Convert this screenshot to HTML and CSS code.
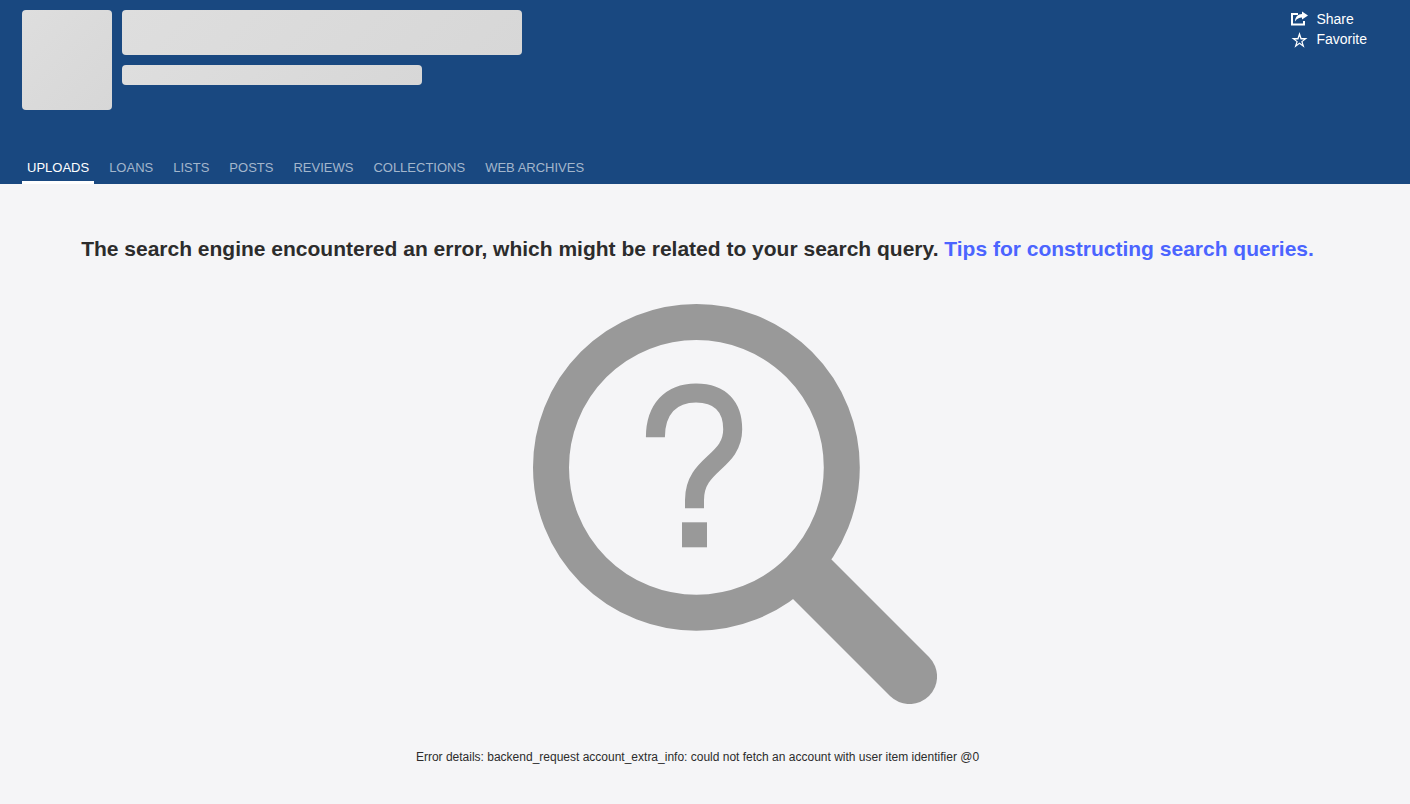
FILE: index.html
```
<!DOCTYPE html>
<html lang="en">
<head>
    <meta charset="UTF-8">
    <meta name="viewport" content="width=device-width, initial-scale=1.0">
    <title>Uploads</title>
    <link rel="stylesheet" href="styles.css">
</head>
<body>
    <header class="profile-header">
        <div class="profile-top">
            <div class="placeholder avatar"></div>
            <div class="profile-info">
                <div class="placeholder name"></div>
                <div class="placeholder subtitle"></div>
            </div>
            <div class="actions">
                <button type="button" class="action-btn">
                    <svg width="18" height="18" viewBox="0 0 18 18" aria-hidden="true">
                        <path d="M8 4H2v10.500h12v-3.500" fill="none" stroke="#fff" stroke-width="2"/>
                        <path d="M12 1.500l6 4-6 4V7.500C9 7.500 7 8.500 5 11.500 5 7 8 4 12 4z" fill="#fff"/>
                    </svg>
                    Share
                </button>
                <button type="button" class="action-btn">
                    <svg width="18" height="18" viewBox="0 0 18 18" aria-hidden="true">
                        <path d="M9.500 2l2 6h6l-4.900 3.700 1.900 6-5-3.700-5 3.700 1.900-6L1.500 8h6zM9.500 6.200L8.400 9.400H5.200l2.600 2-1 3.100 2.700-2 2.700 2-1-3.100 2.600-2h-3.200z" fill="#fff" fill-rule="evenodd"/>
                    </svg>
                    Favorite
                </button>
            </div>
        </div>
        <nav class="tabs">
            <a href="#uploads" class="tab active">UPLOADS</a>
            <a href="#loans" class="tab">LOANS</a>
            <a href="#lists" class="tab">LISTS</a>
            <a href="#posts" class="tab">POSTS</a>
            <a href="#reviews" class="tab">REVIEWS</a>
            <a href="#collections" class="tab">COLLECTIONS</a>
            <a href="#web-archives" class="tab">WEB ARCHIVES</a>
        </nav>
    </header>

    <main class="error-page">
        <h2 class="error-title">The search engine encountered an error, which might be related to your search query. <a href="#tips">Tips for constructing search queries.</a></h2>
        <svg class="error-image" viewBox="-74 0 478 400" aria-hidden="true">
            <circle cx="163.400" cy="163.400" r="145.400" fill="none" stroke="#999" stroke-width="36"/>
            <path d="M289 246L396 353A27.500 27.500 0 0 1 357 392L250 285z" fill="#999"/>
            <path d="M122.400 133.300C122.400 105 138 88.900 163 88.900S199.700 103 199.700 125.300C199.700 159 161.500 159 161.500 196V204.300" fill="none" stroke="#999" stroke-width="19"/>
            <rect x="149" y="218.300" width="25" height="25" fill="#999"/>
        </svg>
        <p class="error-details">Error details: backend_request account_extra_info: could not fetch an account with user item identifier @0</p>
    </main>
</body>
</html>
```

FILE: styles.css
```
html {
    background-color: #f5f5f7;
}

body {
    margin: 0;
    font-family: "Liberation Sans", Arial, sans-serif;
    font-size: 14px;
    line-height: 20px;
    color: #2c2c2c;
}

/* Header */
.profile-header {
    display: flex;
    flex-direction: column;
    gap: 44px;
    padding: 10px 43px 0 22px;
    background-color: #194880;
}

.profile-top {
    display: flex;
    gap: 10px;
}

.profile-info {
    display: flex;
    flex-direction: column;
    gap: 10px;
    flex: 1;
}

.placeholder {
    border-radius: 4px;
    background: linear-gradient(135deg, #dedede, #d7d7d7);
}

.avatar {
    width: 90px;
    height: 100px;
}

.name {
    max-width: 400px;
    height: 45px;
}

.subtitle {
    max-width: 300px;
    height: 20px;
}

.actions {
    display: flex;
    flex-direction: column;
    align-items: flex-start;
    gap: 2px;
}

.action-btn {
    display: flex;
    align-items: center;
    gap: 8px;
    padding: 0;
    border: none;
    background: none;
    color: #fff;
    font: inherit;
    line-height: 18px;
    cursor: pointer;
}

/* Tabs */
.tabs {
    display: flex;
    gap: 10px;
    font-size: 13px;
}

.tab {
    padding: 4px 5px 3px;
    border-bottom: 3px solid transparent;
    color: #a3b6cc;
    text-decoration: none;
}

.tab.active {
    border-bottom-color: #fff;
    color: #fff;
}

/* Error message */
.error-page {
    display: flex;
    flex-direction: column;
    align-items: center;
    padding: 50px 15px 0 0;
    text-align: center;
}

.error-title {
    margin: 0;
    font-size: 21px;
    line-height: 30px;
}

.error-title a {
    color: #4b64ff;
    text-decoration: none;
}

.error-image {
    width: 478px;
    max-width: 100%;
    margin: 40px 0 43px;
}

.error-details {
    margin: 0;
    font-size: 12px;
}
```
